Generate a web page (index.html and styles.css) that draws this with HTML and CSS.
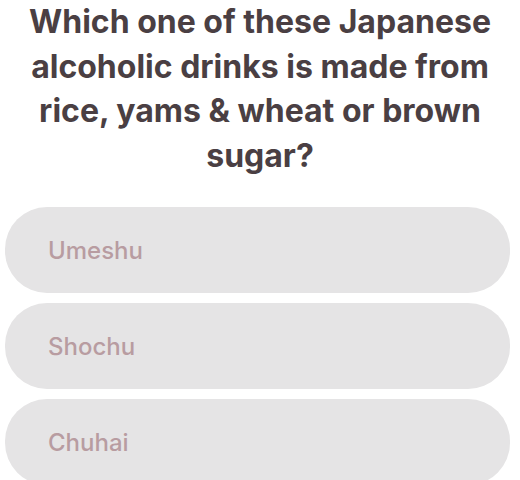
FILE: index.html
```html
<!DOCTYPE html>
<html>
<head>
<meta charset="utf-8">
<link rel="stylesheet" href="styles.css">
</head>
<body>
<div class="quiz">
  <h1 class="question">Which one of these Japanese alcoholic drinks is made from rice, yams &amp; wheat or brown sugar?</h1>
  <div class="options">
    <div class="option">Umeshu</div>
    <div class="option">Shochu</div>
    <div class="option">Chuhai</div>
  </div>
</div>
</body>
</html>
```
FILE: styles.css
```css
html, body {
  margin: 0;
  padding: 0;
  background: #ffffff;
}
.quiz {
  width: 520px;
  height: 480px;
  overflow: hidden;
  font-family: "Inter", "Liberation Sans", sans-serif;
}
.question {
  margin: 0;
  padding: 0 14px;
  font-size: 32px;
  line-height: 44.5px;
  font-weight: 700;
  color: #4a3f43;
  text-align: center;
}
.options {
  display: flex;
  flex-direction: column;
  gap: 10px;
  padding: 29px 10px 0 5px;
}
.option {
  height: 86px;
  border-radius: 42px;
  background: #e5e4e5;
  display: flex;
  align-items: center;
  padding-left: 43px;
  font-size: 24px;
  font-weight: 500;
  color: #b89ca1;
}
```
